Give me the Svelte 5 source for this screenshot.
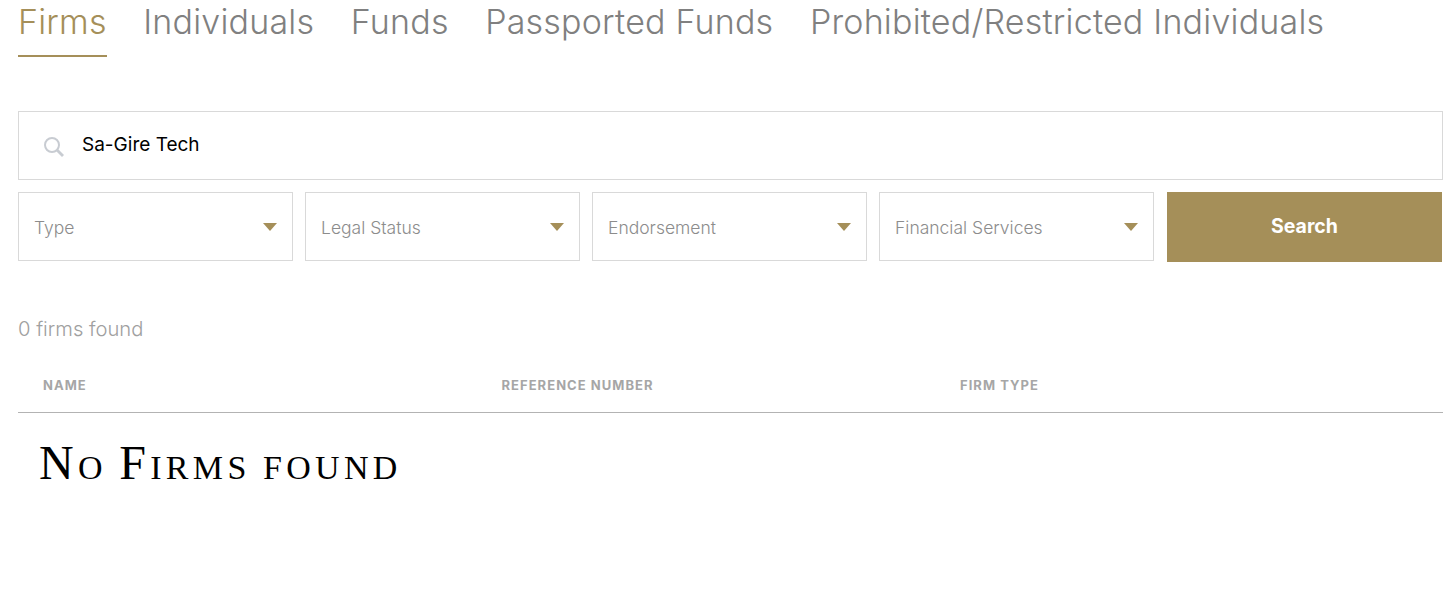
<script>
  const tabs = ['Firms', 'Individuals', 'Funds', 'Passported Funds', 'Prohibited/Restricted Individuals'];
  const filters = ['Type', 'Legal Status', 'Endorsement', 'Financial Services'];
  const columns = ['Name', 'Reference Number', 'Firm Type'];
  let active = 'Firms';
  let query = 'Sa-Gire Tech';
</script>

<div class="page">
  <nav class="tabs">
    {#each tabs as tab}
      <button class="tab" class:active={tab === active} on:click={() => (active = tab)}>{tab}</button>
    {/each}
  </nav>

  <div class="search-box">
    <svg class="search-icon" width="22" height="22" viewBox="0 0 22 22" fill="none" stroke="#c8ccd2" stroke-width="2">
      <circle cx="9" cy="9" r="7"/>
      <line x1="14" y1="14" x2="20" y2="20" stroke-width="2.8"/>
    </svg>
    <input class="search-input" bind:value={query} />
  </div>

  <div class="filters">
    {#each filters as filter}
      <div class="select">
        <span>{filter}</span>
        <i class="caret"></i>
      </div>
    {/each}
    <button class="search-btn">Search</button>
  </div>

  <p class="count">0 firms found</p>

  <div class="table-head">
    {#each columns as col}
      <div class="col">{col}</div>
    {/each}
  </div>

  <h2 class="empty">No Firms found</h2>
</div>

<style>
  :global(body) {
    background: #fff;
  }
  .page {
    padding: 0 8px 0 18px;
    height: 609px;
    box-sizing: border-box;
    overflow: hidden;
    font-family: Inter, "Liberation Sans", sans-serif;
  }
  .tabs {
    display: flex;
    gap: 36.5px;
    height: 57px;
  }
  .tab {
    border: none;
    background: none;
    padding: 0 0 14px;
    height: 57px;
    box-sizing: border-box;
    font: 300 34px/43px Inter, sans-serif;
    letter-spacing: 0.2px;
    color: #808080;
    cursor: pointer;
    white-space: nowrap;
  }
  .tab.active {
    color: #a58f59;
    border-bottom: 2px solid #a58f59;
  }
  .search-box {
    margin-top: 54px;
    height: 69px;
    box-sizing: border-box;
    border: 1px solid #d9d9d9;
    display: flex;
    align-items: center;
    padding-left: 24px;
    gap: 17px;
  }
  .search-icon {
    flex-shrink: 0;
    margin-top: 2px;
  }
  .search-input {
    flex: 1;
    border: none;
    outline: none;
    padding: 0 0 2px;
    font: 400 19px/26px Inter, sans-serif;
    color: #000;
    background: transparent;
  }
  .filters {
    display: grid;
    grid-template-columns: repeat(4, 275px) 276px;
    gap: 12px;
    margin-top: 12px;
  }
  .select {
    height: 69px;
    box-sizing: border-box;
    border: 1px solid #d9d9d9;
    display: flex;
    align-items: center;
    justify-content: space-between;
    padding: 2px 15px 0;
    font-size: 17.5px;
    font-weight: 300;
    color: #8c8c8c;
  }
  .caret {
    width: 0;
    height: 0;
    border-left: 7px solid transparent;
    border-right: 7px solid transparent;
    border-top: 8px solid #a58f59;
    margin-top: -1px;
  }
  .search-btn {
    height: 70px;
    margin-left: 1px;
    padding: 0 0 2px;
    border: none;
    background: #a58f59;
    color: #fff;
    font: 700 19.5px Inter, sans-serif;
    cursor: pointer;
  }
  .count {
    margin: 54px 0 0;
    font-size: 20.2px;
    font-weight: 300;
    line-height: 26px;
    color: #a0a0a0;
  }
  .table-head {
    display: grid;
    grid-template-columns: repeat(3, 458.5px);
    margin-top: 20px;
    height: 51px;
    box-sizing: border-box;
    padding: 13px 0 0 25px;
    border-bottom: 1px solid #b3b3b3;
  }
  .col {
    font-size: 13px;
    font-weight: 700;
    line-height: 20px;
    letter-spacing: 0.08em;
    text-transform: uppercase;
    color: #a6a6a6;
  }
  .empty {
    margin: 22px 0 0 21px;
    font: 400 48px/56px "Liberation Serif", serif;
    font-variant: small-caps;
    letter-spacing: 0.09em;
    word-spacing: -4px;
    color: #000;
  }
</style>
